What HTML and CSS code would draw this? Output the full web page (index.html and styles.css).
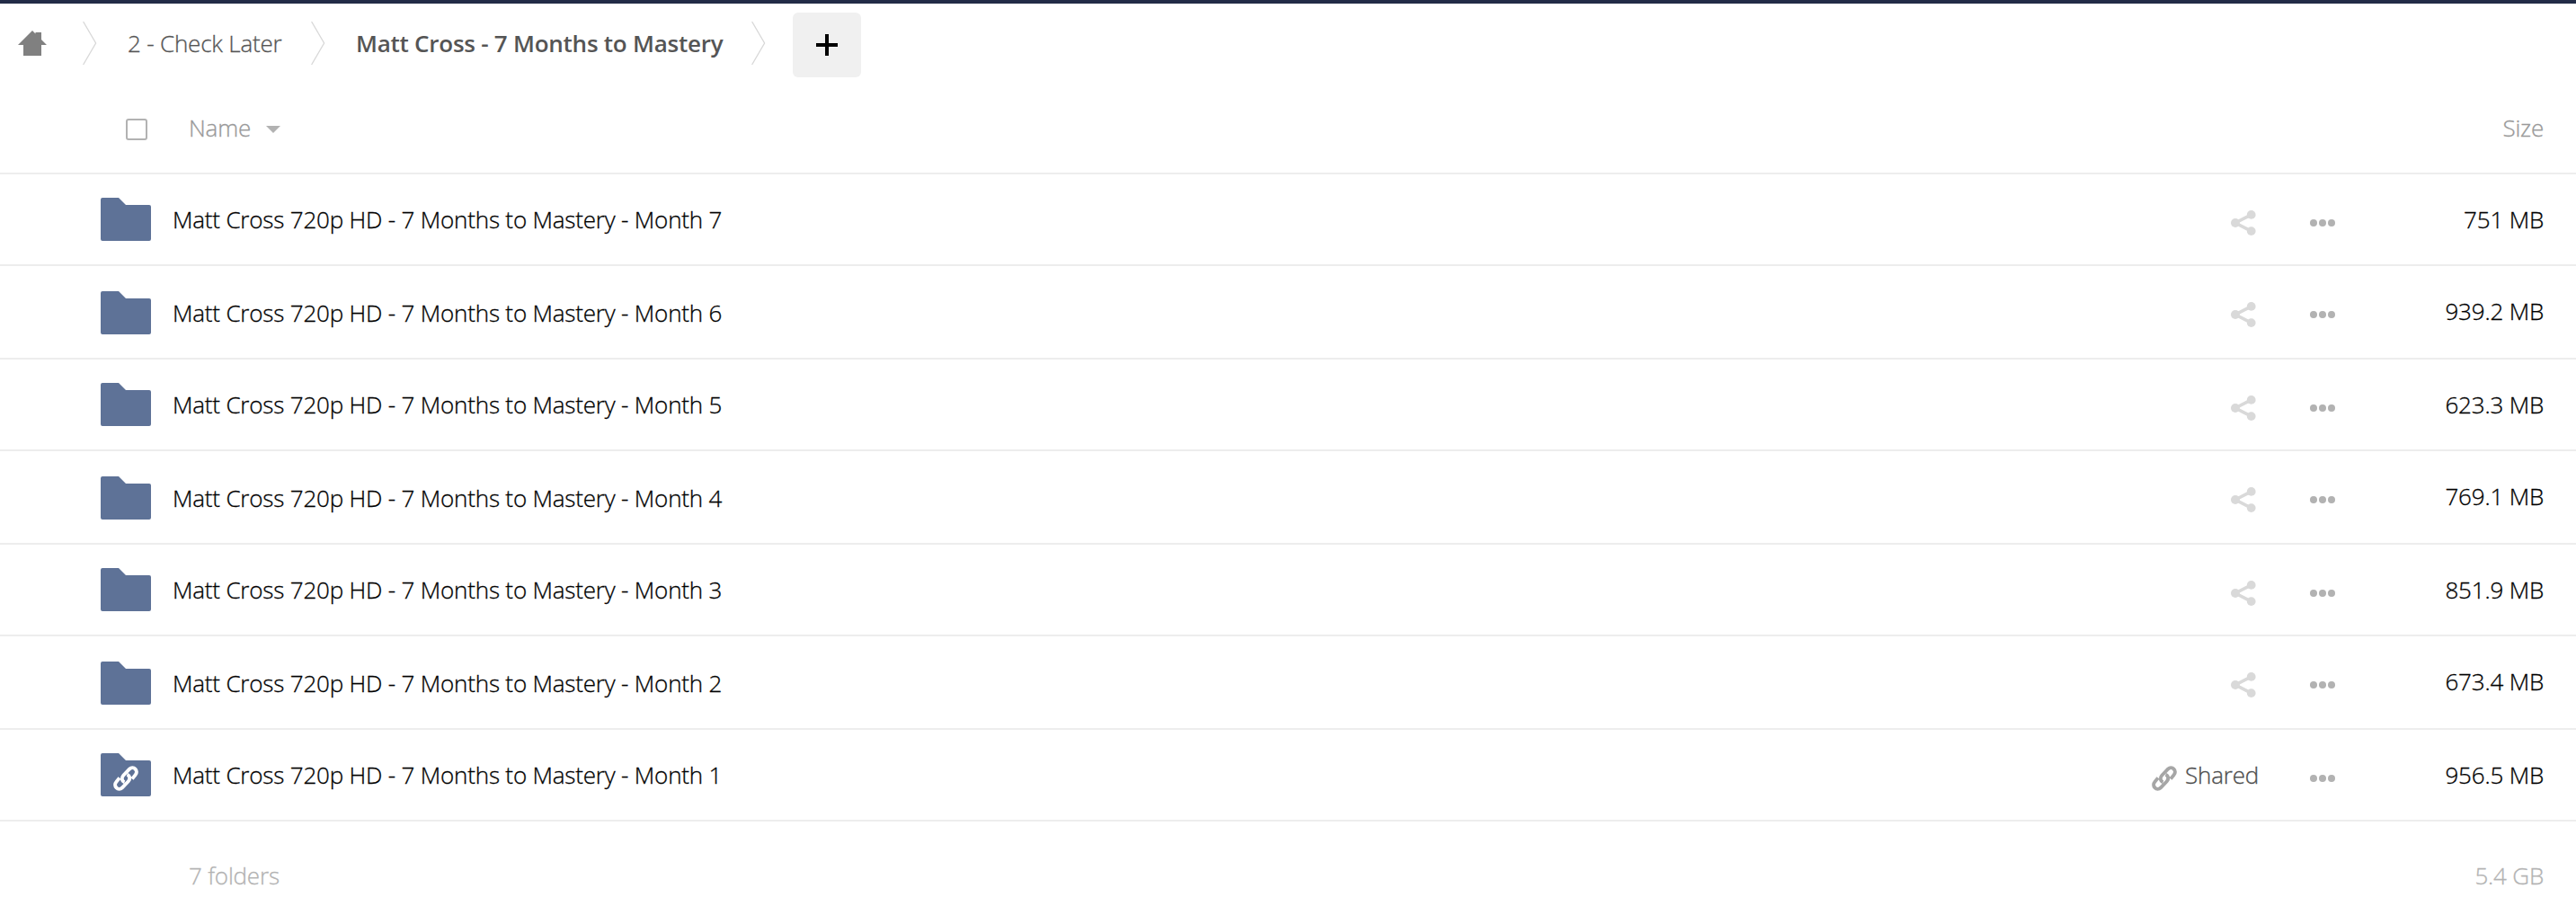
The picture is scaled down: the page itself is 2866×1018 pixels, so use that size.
FILE: index.html
```html
<!DOCTYPE html>
<html lang="en">
<head>
    <meta charset="UTF-8">
    <meta name="viewport" content="width=device-width, initial-scale=1.0">
    <title>Files</title>
    <link rel="stylesheet" href="styles.css">
</head>
<body>
    <!-- shared icons -->
    <svg class="sprite">
        <symbol id="folder" viewBox="0 0 56 48">
            <path d="M2 0H20L28 8H54a2 2 0 0 1 2 2V46a2 2 0 0 1-2 2H2a2 2 0 0 1-2-2V2a2 2 0 0 1 2-2z"/>
        </symbol>
        <symbol id="share" viewBox="0 0 28 28">
            <path d="M22.7 4.8L5 14L22.7 23.2" fill="none" stroke="currentColor" stroke-width="3.6"/>
            <circle cx="5" cy="14" r="5"/>
            <circle cx="22.7" cy="4.9" r="4.9"/>
            <circle cx="22.7" cy="23.1" r="4.9"/>
        </symbol>
        <symbol id="link" viewBox="0 0 28 28">
            <g fill="none" stroke="currentColor" stroke-width="3.9">
                <path d="M12.6 18.2C9.6 17.2 8.8 13.4 11.2 10.8L18.2 3.5a4.6 4.6 0 0 1 6.5 6.5L21 14.6"/>
                <path d="M15.4 9.8C18.4 10.8 19.2 14.6 16.8 17.2L9.8 24.5a4.6 4.6 0 0 1-6.5-6.5L7 13.4"/>
            </g>
        </symbol>
        <symbol id="dots" viewBox="0 0 28 8">
            <circle cx="4" cy="4" r="4"/>
            <circle cx="14" cy="4" r="4"/>
            <circle cx="24" cy="4" r="4"/>
        </symbol>
        <symbol id="crumb" viewBox="0 0 16 48">
            <path d="M.6 0L14.6 24L.6 48" fill="none" stroke="#d8d8d8" stroke-width="1.3"/>
        </symbol>
    </svg>

    <div class="controls">
        <svg class="home" viewBox="0 0 32 28"><path d="M0 16L16 0L19.5 3.5V2H26V10L32 16H26V28H6V16z"/></svg>
        <svg class="crumb"><use href="#crumb"/></svg>
        <a class="parent">2 - Check Later</a>
        <svg class="crumb"><use href="#crumb"/></svg>
        <a class="current">Matt Cross - 7 Months to Mastery</a>
        <svg class="crumb"><use href="#crumb"/></svg>
        <button class="new"><svg viewBox="0 0 24 24"><path d="M10 0h4v10h10v4H14v10h-4V14H0v-4h10z"/></svg></button>
    </div>

    <div class="head">
        <span class="checkbox"></span>
        <span class="label">Name</span>
        <svg class="sort" viewBox="0 0 16 8"><path d="M0 0H16L8 8z"/></svg>
        <span class="size">Size</span>
    </div>

    <div class="files">
        <div class="row">
            <div class="folder"><svg><use href="#folder"/></svg></div>
            <span class="name">Matt Cross 720p HD - 7 Months to Mastery - Month 7</span>
            <svg class="share"><use href="#share"/></svg>
            <svg class="dots"><use href="#dots"/></svg>
            <span class="size">751 MB</span>
        </div>
        <div class="row">
            <div class="folder"><svg><use href="#folder"/></svg></div>
            <span class="name">Matt Cross 720p HD - 7 Months to Mastery - Month 6</span>
            <svg class="share"><use href="#share"/></svg>
            <svg class="dots"><use href="#dots"/></svg>
            <span class="size">939.2 MB</span>
        </div>
        <div class="row">
            <div class="folder"><svg><use href="#folder"/></svg></div>
            <span class="name">Matt Cross 720p HD - 7 Months to Mastery - Month 5</span>
            <svg class="share"><use href="#share"/></svg>
            <svg class="dots"><use href="#dots"/></svg>
            <span class="size">623.3 MB</span>
        </div>
        <div class="row">
            <div class="folder"><svg><use href="#folder"/></svg></div>
            <span class="name">Matt Cross 720p HD - 7 Months to Mastery - Month 4</span>
            <svg class="share"><use href="#share"/></svg>
            <svg class="dots"><use href="#dots"/></svg>
            <span class="size">769.1 MB</span>
        </div>
        <div class="row">
            <div class="folder"><svg><use href="#folder"/></svg></div>
            <span class="name">Matt Cross 720p HD - 7 Months to Mastery - Month 3</span>
            <svg class="share"><use href="#share"/></svg>
            <svg class="dots"><use href="#dots"/></svg>
            <span class="size">851.9 MB</span>
        </div>
        <div class="row">
            <div class="folder"><svg><use href="#folder"/></svg></div>
            <span class="name">Matt Cross 720p HD - 7 Months to Mastery - Month 2</span>
            <svg class="share"><use href="#share"/></svg>
            <svg class="dots"><use href="#dots"/></svg>
            <span class="size">673.4 MB</span>
        </div>
        <div class="row">
            <div class="folder"><svg><use href="#folder"/></svg><svg class="overlay"><use href="#link"/></svg></div>
            <span class="name">Matt Cross 720p HD - 7 Months to Mastery - Month 1</span>
            <svg class="link"><use href="#link"/></svg>
            <span class="shared">Shared</span>
            <svg class="dots"><use href="#dots"/></svg>
            <span class="size">956.5 MB</span>
        </div>
    </div>

    <div class="summary">
        <span>7 folders</span>
        <span>5.4 GB</span>
    </div>
</body>
</html>
```

FILE: styles.css
```css
* {
    box-sizing: border-box;
}

body {
    margin: 0;
    background: #fff;
    border-top: 4px solid #222c47;
    font-family: "Open Sans", sans-serif;
    font-size: 26px;
    font-weight: 300;
    letter-spacing: -0.19px;
    line-height: 36px;
    color: #000;
    -webkit-text-stroke: 0.3px;
    overflow: hidden;
}

svg {
    display: block;
    flex: none;
    fill: currentColor;
}

.sprite {
    display: none;
}

/* breadcrumb */
.controls {
    display: flex;
    align-items: flex-start;
    height: 92px;
    padding-left: 20px;
    color: #555;
    white-space: nowrap;
}

.home {
    width: 32px;
    height: 28px;
    margin: 30px 40px 0 0;
    color: #808080;
}

.crumb {
    width: 16px;
    height: 48px;
    margin-top: 20px;
}

.parent,
.current {
    margin-top: 26px;
    padding-left: 34px;
}

.parent {
    width: 238px;
}

.current {
    width: 474px;
    font-weight: 600;
    letter-spacing: -0.25px;
    -webkit-text-stroke: 0;
}

.new {
    width: 76px;
    height: 72px;
    margin: 10px 0 0 30px;
    padding: 24px 26px;
    border: none;
    border-radius: 6px;
    background: #f0f0f0;
    color: #000;
}

.new svg {
    width: 24px;
    height: 24px;
}

/* table header */
.head {
    display: flex;
    align-items: flex-start;
    height: 98px;
    padding: 28px 36px 0 140px;
    border-bottom: 2px solid #ededed;
    color: #999;
}

.checkbox {
    width: 24px;
    height: 24px;
    margin: 8px 46px 0 0;
    border: 2px solid #b2b2b2;
    border-radius: 3px;
}

.label {
    width: 86px;
}

.sort {
    width: 16px;
    height: 8px;
    margin-top: 16px;
    color: #b2b2b2;
}

.head .size {
    margin-left: auto;
}

/* file list */
.row {
    display: flex;
    align-items: flex-start;
    height: 102px;
    padding: 26px 36px 0 112px;
    border-bottom: 2px solid #ededed;
    white-space: nowrap;
}

.row:nth-child(even) {
    height: 104px;
}

.folder {
    position: relative;
    width: 56px;
    height: 48px;
    color: #5e7297;
}

.folder svg {
    width: 56px;
    height: 48px;
}

.folder .overlay {
    position: absolute;
    left: 14px;
    top: 14px;
    width: 28px;
    height: 28px;
    color: #fff;
}

.name {
    flex: 1;
    margin: 6px 0 0 24px;
}

.row:nth-child(even) .folder {
    margin-top: 2px;
}

.row:nth-child(even) .name {
    margin-top: 8px;
}

.share,
.link {
    width: 28px;
    height: 28px;
    margin-top: 14px;
}

.share {
    margin-right: 60px;
    color: #d9d9d9;
}

.link {
    color: #a6a6a6;
}

.shared {
    width: 148px;
    margin-top: 6px;
    padding-left: 9px;
    color: #4d4d4d;
}

.dots {
    width: 28px;
    height: 8px;
    margin-top: 24px;
    color: #b2b2b2;
}

.row .size {
    width: 232px;
    margin-top: 6px;
    text-align: right;
}

/* totals */
.summary {
    display: flex;
    justify-content: space-between;
    padding: 42px 36px 0 210px;
    color: #b2b2b2;
}
```
